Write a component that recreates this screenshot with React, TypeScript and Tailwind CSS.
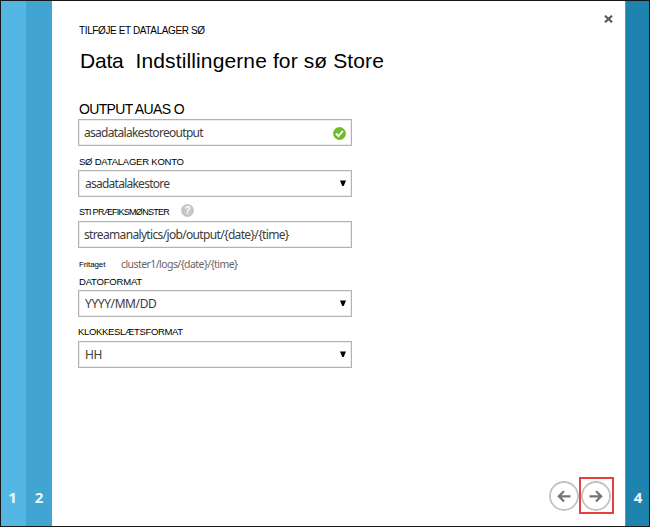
import type { ReactNode } from "react";

function Field({ children, icon }: { children: ReactNode; icon?: ReactNode }) {
  return (
    <div className="flex h-[27px] w-[274px] shrink-0 items-center justify-between border border-[#b3b3b3] pt-px pr-[5px] pl-[5px] font-['Noto_Sans','Open_Sans',sans-serif] text-[12px] text-[#3c3c3c] outline outline-[#ededed] -outline-offset-2">
      {children}
      {icon}
    </div>
  );
}

function Caret() {
  return (
    <svg width="6" height="7" viewBox="0 0 6 7" className="mb-px">
      <path d="M0 .5h6L3.7 6H2.3z" fill="#000" />
    </svg>
  );
}

function Check() {
  return (
    <svg width="13" height="13" viewBox="0 0 13 13">
      <circle cx="6.5" cy="6.5" r="6.4" fill="#70bd2b" />
      <path d="M3 6.5l2.5 2.6L9.8 4" fill="none" stroke="#fff" strokeWidth="1.9" />
    </svg>
  );
}

function Arrow({ back = false }: { back?: boolean }) {
  return (
    <svg width="30" height="30" viewBox="0 0 30 30" className={back ? "" : "-scale-x-100"}>
      <circle cx="15" cy="15" r="14" fill="#fff" stroke="#c3c3c3" strokeWidth="1.8" />
      <path d="M21.5 15.3H10M15 10.2l-5.2 5.1 5.2 5.1" fill="none" stroke="#757575" strokeWidth="2.2" />
    </svg>
  );
}

export default function App() {
  return (
    <div className="flex h-[527px] w-[650px] overflow-hidden border border-[#17171a] bg-white font-['Liberation_Sans',Arial,sans-serif] whitespace-pre text-black">
      <div className="flex w-[25px] shrink-0 items-end justify-center bg-[#54b6e2] pr-0.5 pb-[19px] font-['Open_Sans',sans-serif] text-[15px] leading-5 font-bold text-[#eef8fc]">1</div>
      <div className="flex w-[26px] shrink-0 items-end justify-center bg-[#42a4d0] pb-[19px] font-['Open_Sans',sans-serif] text-[15px] leading-5 font-bold text-[#eef8fc]">2</div>
      <main className="flex min-w-0 flex-1 flex-col pl-[26px]">
        <header className="flex h-[44px] shrink-0 justify-between pr-[12px]">
          <span className="mt-[24px] ml-px h-3 text-[10px] leading-3 tracking-[-0.38px]">TILFØJE ET DATALAGER SØ</span>
          <svg width="9" height="8" viewBox="0 0 9 8" className="mt-[14px]">
            <path d="M1 .7l7 6.6M8 .7L1 7.3" stroke="#58585a" strokeWidth="2.1" />
          </svg>
        </header>
        <h1 className="ml-0.5 h-[56px] shrink-0 text-[21px] leading-8">
          <span className="tracking-[-0.2px]">Data</span>
          <span className="ml-3 tracking-[0.12px]">Indstillingerne for sø Store</span>
        </h1>
        <div className="h-[18px] shrink-0 pl-px text-[14px] leading-4 tracking-[-0.65px]">OUTPUT AUAS O</div>
        <Field icon={<Check />}><span className="tracking-[-0.7px]">asadatalakestoreoutput</span></Field>
        <div className="h-[24px] shrink-0 pt-[10px] pl-px text-[9.5px] leading-3 tracking-[-0.22px]">SØ DATALAGER KONTO</div>
        <Field icon={<Caret />}><span className="ml-px tracking-[-0.75px]">asadatalakestore</span></Field>
        <div className="flex h-[24px] shrink-0 items-start pt-[7px] text-[9px] leading-3">
          <span className="mt-[2px] w-[103px] pl-px tracking-[-0.72px]">STI PRÆFIKSMØNSTER</span>
          <span className="flex size-[13px] items-center justify-center rounded-full bg-[#c6c6c6] text-[10px] font-bold text-white">?</span>
        </div>
        <Field><span className="tracking-[-0.66px]">streamanalytics/job/output/{"{date}/{time}"}</span></Field>
        <div className="flex h-[26px] shrink-0 items-center pt-[8px]">
          <span className="w-[43px] pl-px text-[8px] tracking-[-0.1px]">Fritaget</span>
          <span className="font-['Noto_Sans',sans-serif] text-[10.5px] tracking-[-0.57px] text-[#666]">cluster1/logs/{"{date}/{time}"}</span>
        </div>
        <div className="h-[16px] shrink-0 pt-[2px] pl-px text-[9.5px] leading-3 tracking-[-0.2px]">DATOFORMAT</div>
        <Field icon={<Caret />}><span className="ml-px tracking-[-0.4px]">YYYY/MM/DD</span></Field>
        <div className="h-[24px] shrink-0 pt-[9px] text-[9.5px] leading-3 tracking-[-0.35px]">KLOKKESLÆTSFORMAT</div>
        <Field icon={<Caret />}><span className="ml-px tracking-[-0.5px]">HH</span></Field>
        <footer className="mt-auto flex items-center justify-end pr-[11px] pb-[12px]">
          <Arrow back />
          <div className="flex h-[37px] w-[35px] items-center justify-center border-2 border-[#e83f41] pr-px"><Arrow /></div>
        </footer>
      </main>
      <div className="flex w-[24px] shrink-0 items-end justify-center border-l border-[#4b9fc5] bg-[#1f83b0] pb-[19px] pl-px font-['Open_Sans',sans-serif] text-[15px] leading-5 font-bold text-[#eef8fc]">4</div>
    </div>
  );
}
